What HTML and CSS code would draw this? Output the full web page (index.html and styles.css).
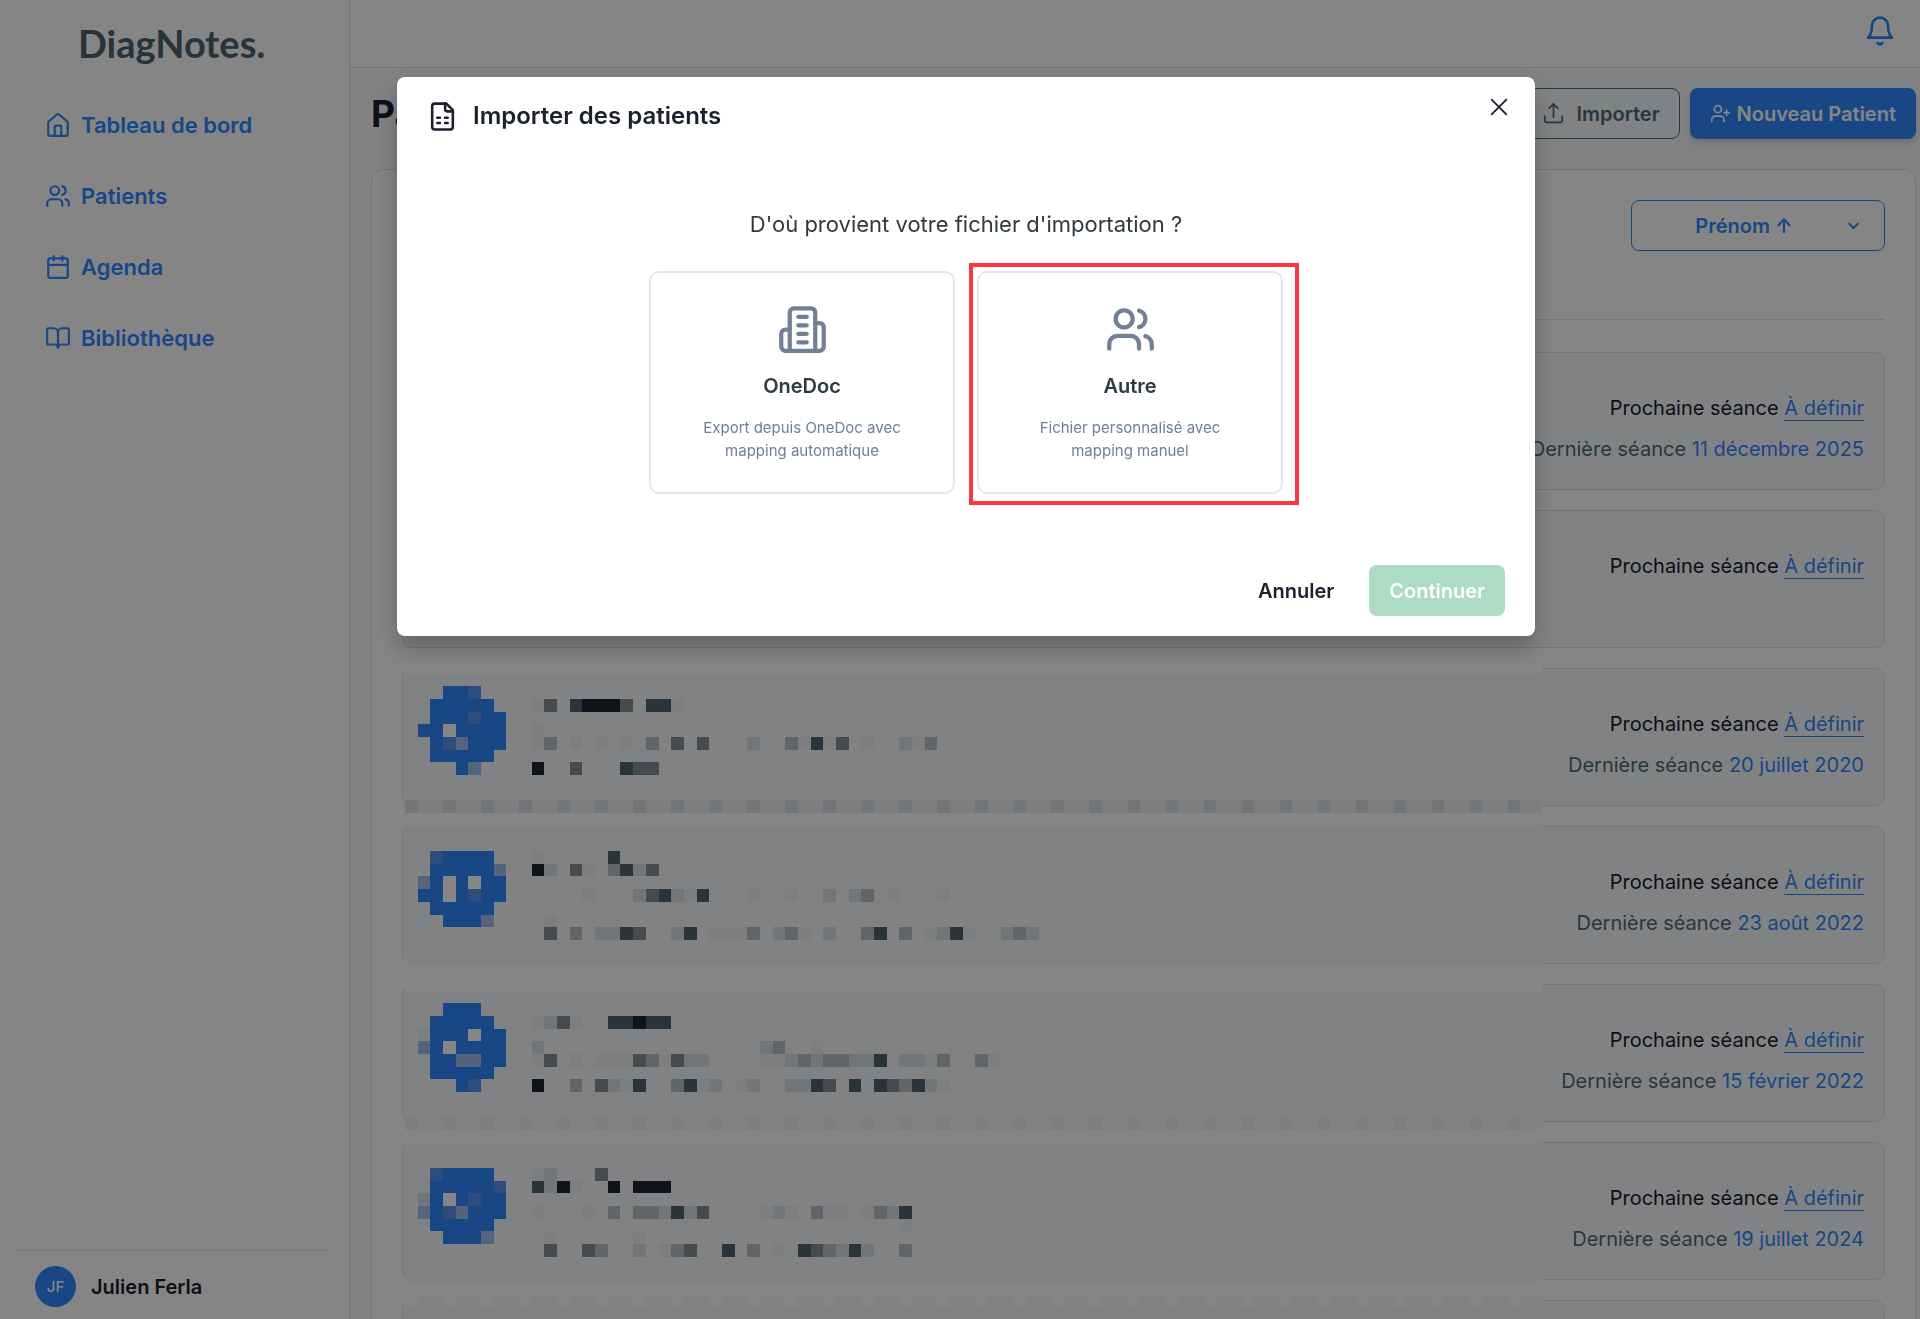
FILE: index.html
```
<!DOCTYPE html>
<html lang="fr">
<head>
    <meta charset="UTF-8">
    <meta name="viewport" content="width=device-width, initial-scale=1.0">
    <title>DiagNotes - Patients</title>
    <link rel="stylesheet" href="styles.css">
</head>
<body>
    <!-- Shared icons -->
    <svg class="sprite" aria-hidden="true">
        <symbol id="icon-users" viewBox="0 0 24 24">
            <path d="M16 21v-2a4 4 0 0 0-4-4H6a4 4 0 0 0-4 4v2"/>
            <circle cx="9" cy="7" r="4"/>
            <path d="M22 21v-2a4 4 0 0 0-3-3.87"/>
            <path d="M16 3.13a4 4 0 0 1 0 7.75"/>
        </symbol>
    </svg>

    <div class="app">
        <aside class="sidebar">
            <div class="logo">DiagNotes.</div>
            <nav class="nav">
                <a class="nav-link" href="#">
                    <svg class="icon icon-nav" viewBox="0 0 24 24"><path d="M3 10a2 2 0 0 1 .7-1.5l7-6a2 2 0 0 1 2.6 0l7 6A2 2 0 0 1 21 10v10a2 2 0 0 1-2 2H5a2 2 0 0 1-2-2z"/><path d="M9 22v-8.500a1 1 0 0 1 1-1h4a1 1 0 0 1 1 1V22"/></svg>
                    Tableau de bord
                </a>
                <a class="nav-link" href="#">
                    <svg class="icon icon-nav"><use href="#icon-users"/></svg>
                    Patients
                </a>
                <a class="nav-link" href="#">
                    <svg class="icon icon-nav" viewBox="0 0 24 24"><rect x="3" y="4" width="18" height="18" rx="2"/><path d="M8 2v4M16 2v4M3 10h18"/></svg>
                    Agenda
                </a>
                <a class="nav-link" href="#">
                    <svg class="icon icon-nav" viewBox="0 0 24 24"><path d="M12 7v14"/><path d="M3 18a1 1 0 0 1-1-1V4a1 1 0 0 1 1-1h5a4 4 0 0 1 4 4 4 4 0 0 1 4-4h5a1 1 0 0 1 1 1v13a1 1 0 0 1-1 1h-6a3 3 0 0 0-3 3 3 3 0 0 0-3-3z"/></svg>
                    Bibliothèque
                </a>
            </nav>
            <div class="account">
                <span class="account-badge">JF</span>
                <span>Julien Ferla</span>
            </div>
        </aside>

        <div class="content">
            <header class="topbar">
                <button class="bell" type="button" aria-label="Notifications">
                    <svg class="icon icon-bell" viewBox="0 0 24 24"><path d="M6 8a6 6 0 0 1 12 0c0 7 3 9 3 9H3s3-2 3-9"/><path d="M10.300 21a1.940 1.940 0 0 0 3.400 0"/></svg>
                </button>
            </header>

            <main class="page">
                <div class="page-head">
                    <h1>Patients</h1>
                    <div class="page-actions">
                        <button class="btn btn-outline" type="button">
                            <svg class="icon icon-btn" viewBox="0 0 24 24"><path d="M2 15v5a2 2 0 0 0 2 2h16a2 2 0 0 0 2-2v-5"/><path d="M7 6l5-5 5 5M12 1v15"/></svg>
                            Importer
                        </button>
                        <button class="btn btn-primary" type="button">
                            <svg class="icon icon-btn" viewBox="0 0 24 24"><path d="M16 21v-2a4 4 0 0 0-4-4H6a4 4 0 0 0-4 4v2"/><circle cx="9" cy="7" r="4"/><path d="M19 8v6M22 11h-6"/></svg>
                            Nouveau Patient
                        </button>
                    </div>
                </div>

                <section class="panel">
                    <div class="toolbar">
                        <div class="select-wrap">
                            <select class="sort" aria-label="Trier par">
                                <option>Prénom ↑</option>
                            </select>
                            <svg class="icon icon-chevron" viewBox="0 0 24 24"><path d="M5 9l7 7 7-7"/></svg>
                        </div>
                    </div>

                    <div class="patients">
                        <article class="patient">
                            <p class="next">Prochaine séance <a href="#">À définir</a></p>
                            <p class="last">Dernière séance <span>11 décembre 2025</span></p>
                        </article>
                        <article class="patient">
                            <p class="next">Prochaine séance <a href="#">À définir</a></p>
                        </article>
                        <article class="patient">
                            <p class="next">Prochaine séance <a href="#">À définir</a></p>
                            <p class="last">Dernière séance <span>20 juillet 2020</span></p>
                        </article>
                        <article class="patient">
                            <p class="next">Prochaine séance <a href="#">À définir</a></p>
                            <p class="last">Dernière séance <span>23 août 2022</span></p>
                        </article>
                        <article class="patient">
                            <p class="next">Prochaine séance <a href="#">À définir</a></p>
                            <p class="last">Dernière séance <span>15 février 2022</span></p>
                        </article>
                        <article class="patient">
                            <p class="next">Prochaine séance <a href="#">À définir</a></p>
                            <p class="last">Dernière séance <span>19 juillet 2024</span></p>
                        </article>
                        <article class="patient"></article>
                        <svg id="mosaic" class="mosaic" viewBox="0 -1 89.7 52" shape-rendering="crispEdges" aria-hidden="true"></svg>
                    </div>
                </section>
            </main>
        </div>
    </div>

    <div class="overlay">
        <div class="modal" role="dialog" aria-modal="true" aria-labelledby="modal-title">
            <div class="modal-head">
                <svg class="icon icon-file" viewBox="0 0 24 24"><path d="M15 2H6a2 2 0 0 0-2 2v16a2 2 0 0 0 2 2h12a2 2 0 0 0 2-2V7z"/><path d="M14 2v4a2 2 0 0 0 2 2h4"/><path d="M8 13h2M14 13h2M8 17h2M14 17h2"/></svg>
                <h2 id="modal-title">Importer des patients</h2>
                <button class="close" type="button" aria-label="Fermer">
                    <svg class="icon icon-close" viewBox="0 0 24 24"><path d="M4 4l16 16M20 4L4 20"/></svg>
                </button>
            </div>
            <div class="modal-body">
                <p class="question">D'où provient votre fichier d'importation ?</p>
                <div class="sources">
                    <button class="source" type="button">
                        <svg class="icon icon-source" viewBox="0 0 24 24"><path d="M6 22V4a2 2 0 0 1 2-2h8a2 2 0 0 1 2 2v18z"/><path d="M6 12H4a2 2 0 0 0-2 2v6a2 2 0 0 0 2 2h2"/><path d="M18 9h2a2 2 0 0 1 2 2v9a2 2 0 0 1-2 2h-2"/><path d="M10 6h4M10 10h4M10 14h4M10 18h4"/></svg>
                        <strong>OneDoc</strong>
                        <span>Export depuis OneDoc avec mapping automatique</span>
                    </button>
                    <div class="source-marked">
                        <button class="source" type="button">
                            <svg class="icon icon-source"><use href="#icon-users"/></svg>
                            <strong>Autre</strong>
                            <span>Fichier personnalisé avec mapping manuel</span>
                        </button>
                    </div>
                </div>
            </div>
            <div class="modal-foot">
                <button class="btn btn-ghost" type="button">Annuler</button>
                <button class="btn btn-continue" type="button" disabled>Continuer</button>
            </div>
        </div>
    </div>

    <script src="mosaic.js"></script>
</body>
</html>
```
FILE: styles.css
```
* {
    box-sizing: border-box;
}
body {
    margin: 0;
    height: 100vh;
    overflow: hidden;
    font-family: Inter, "Liberation Sans", sans-serif;
    font-size: 20px;
    line-height: 30px;
    color: #1a202c;
    background-color: #fff;
}
h1, h2, p {
    margin: 0;
}
button, select {
    font: inherit;
    cursor: pointer;
}
.sprite {
    display: none;
}
.icon {
    flex-shrink: 0;
    fill: none;
    stroke: currentColor;
    stroke-width: 2;
    stroke-linecap: round;
    stroke-linejoin: round;
}
.app {
    display: flex;
    height: 100vh;
}

/* Sidebar */
.sidebar {
    display: flex;
    flex-direction: column;
    width: 350px;
    flex-shrink: 0;
    padding: 18px 20px 12px 15px;
    border-right: 1px solid #dbe2ea;
}
.logo {
    padding-left: 63px;
    font-family: Lato, sans-serif;
    font-size: 38px;
    font-weight: 700;
    line-height: 50px;
    color: #4b6470;
}
.nav {
    display: flex;
    flex-direction: column;
    gap: 41px;
    padding: 42px 0 0 30px;
}
.nav-link {
    display: flex;
    align-items: center;
    gap: 10px;
    font-size: 22px;
    font-weight: 600;
    color: #3187ff;
    text-decoration: none;
}
.icon-nav {
    width: 26px;
    height: 26px;
}
.account {
    display: flex;
    align-items: center;
    gap: 15px;
    margin-top: auto;
    padding: 15px 20px 0;
    border-top: 2px solid #eceff3;
    font-weight: 600;
}
.account-badge {
    display: flex;
    align-items: center;
    justify-content: center;
    width: 41px;
    height: 41px;
    border-radius: 50%;
    background-color: #3187ff;
    color: #fff;
    font-size: 15px;
    font-weight: 500;
}

/* Main column */
.content {
    flex: 1;
    min-width: 0;
    display: flex;
    flex-direction: column;
    overflow: hidden;
    background-color: #f7fafd;
}
.topbar {
    display: flex;
    justify-content: flex-end;
    align-items: center;
    height: 68px;
    flex-shrink: 0;
    padding: 0 24px 5px 0;
    background-color: #fff;
    border-bottom: 1px solid #dbe2ea;
}
.bell {
    display: flex;
    padding: 0;
    border: none;
    background: none;
    color: #3187ff;
}
.icon-bell {
    width: 32px;
    height: 32px;
}
.page {
    padding: 20px 4px 0 21px;
}
.page-head {
    display: flex;
    justify-content: space-between;
    align-items: center;
}
h1 {
    font-size: 37px;
    font-weight: 700;
}
.page-actions {
    display: flex;
    gap: 10px;
}
.btn {
    display: flex;
    align-items: center;
    height: 51px;
    padding: 0 19px;
    border: 1px solid transparent;
    border-radius: 8px;
    font-weight: 600;
}
.btn-outline {
    gap: 12px;
    border-color: #4f6a77;
    background: none;
    color: #4f6a77;
}
.btn-primary {
    gap: 6px;
    background-color: #3187ff;
    color: #fff;
    box-shadow: 0 4px 8px rgba(0, 0, 0, 0.15);
}
.icon-btn {
    width: 21px;
    height: 21px;
}
.panel {
    margin-top: 30px;
    padding: 30px;
    background-color: #fff;
    border: 1px solid #dbe2ea;
    border-radius: 12px;
}
.toolbar {
    display: flex;
    justify-content: flex-end;
    padding-bottom: 68px;
    border-bottom: 1px solid #dbe2ea;
}
.select-wrap {
    position: relative;
    width: 254px;
}
.sort {
    appearance: none;
    width: 100%;
    height: 51px;
    padding: 0 48px 0 20px;
    border: 1px solid #3187ff;
    border-radius: 8px;
    background-color: #fff;
    color: #3187ff;
    font-weight: 600;
    text-align: center;
    text-align-last: center;
}
.icon-chevron {
    position: absolute;
    right: 24px;
    top: 18px;
    width: 15px;
    height: 15px;
    color: #3187ff;
    stroke-width: 3;
    pointer-events: none;
}

/* Patient list */
.patients {
    position: relative;
    display: flex;
    flex-direction: column;
    gap: 20px;
    padding-top: 32px;
}
.patient {
    display: flex;
    flex-direction: column;
    align-items: flex-end;
    gap: 11px;
    min-height: 138px;
    padding: 40px 20px 20px;
    background-color: #f7fafd;
    border: 1px solid #dbe2ea;
    border-radius: 10px;
}
.next a {
    color: #3187ff;
    text-decoration: none;
    border-bottom: 1px solid #3187ff;
}
.last {
    color: #4f6a77;
}
.last span {
    color: #3187ff;
}
.mosaic {
    position: absolute;
    top: 341px;
    left: 3px;
    width: 1137px;
}
.m-page { fill: #fff; }
.m-card { fill: #f7fafd; }
.m-1 { fill: #f0f2f4; }
.m-2 { fill: #dde2e8; }
.m-3 { fill: #bdc2c7; }
.m-4 { fill: #8a9195; }
.m-5 { fill: #4f6670; }
.m-6 { fill: #1f2733; }
.m-B { fill: #3187ff; }
.m-d { fill: #5c92f0; }
.m-c { fill: #a3beef; }
.m-w { fill: #fff; }

/* Import dialog */
.overlay {
    position: fixed;
    inset: 0;
    display: flex;
    justify-content: center;
    align-items: flex-start;
    padding: 77px 0 0 12px;
    background-color: rgba(0, 0, 0, 0.48);
}
.modal {
    width: 100%;
    max-width: 1138px;
    background-color: #fff;
    border-radius: 8px;
    box-shadow: 0 12px 24px rgba(0, 0, 0, 0.25);
}
.modal-head {
    display: flex;
    align-items: flex-end;
    gap: 15px;
    height: 55px;
    padding: 19px 25px 0 30px;
}
.icon-file {
    width: 31px;
    height: 31px;
}
h2 {
    flex: 1;
    font-size: 24px;
    font-weight: 600;
    line-height: 32px;
}
.close {
    display: flex;
    align-self: flex-start;
    padding: 0;
    border: none;
    background: none;
    color: inherit;
}
.icon-close {
    width: 22px;
    height: 22px;
}
.modal-body {
    padding: 77px 30px 0;
    color: #2d3a42;
}
.question {
    font-size: 22px;
    text-align: center;
}
.sources {
    display: flex;
    justify-content: center;
    gap: 22px;
    padding-top: 32px;
}
.source {
    display: flex;
    flex-direction: column;
    align-items: center;
    width: 306px;
    padding: 31px 48px 30px;
    border: 2px solid #e2e8f0;
    border-radius: 10px;
    background-color: #fff;
    color: #2d3a42;
}
.source strong {
    margin-top: 16px;
    font-weight: 600;
}
.source span {
    margin-top: 15px;
    font-size: 15px;
    line-height: 23px;
    color: #718096;
}
.icon-source {
    width: 51px;
    height: 51px;
    color: #718096;
}
.source-marked {
    position: relative;
}
.source-marked::after {
    content: "";
    position: absolute;
    inset: -8px -16px -11px -8px;
    border: 4px solid #ff3341;
    pointer-events: none;
}
.modal-foot {
    display: flex;
    justify-content: flex-end;
    gap: 15px;
    padding: 71px 30px 20px;
}
.btn-ghost {
    background: none;
    color: #1a202c;
}
.btn-continue {
    background-color: #aedbc3;
    color: #fff;
}
```
FILE: mosaic.js
```
const mosaic = document.getElementById('mosaic');

function addRect(x, y, width, height, name) {
    const rect = document.createElementNS('http://www.w3.org/2000/svg', 'rect');
    rect.setAttribute('x', x);
    rect.setAttribute('y', y);
    rect.setAttribute('width', width);
    rect.setAttribute('height', height);
    rect.setAttribute('class', 'm-' + name);
    mosaic.appendChild(rect);
}

// Row number -> tiles from the left edge, "." is an empty tile
const rows = {
    1: '...BBd',
    2: '..BBBBB...14.56664.551',
    3: '..BBBdBB',
    4: '.BBwBBBB..1',
    5: '..BdcBBB..13.1.1.1.3.4.4...2..31514.1..213',
    6: '..BBBBB',
    7: '....Bc....6..4...544',
    14: '..dBBBB...1.....5',
    15: '..BBBBBc..62.41.3524',
    16: '.cBwBwBB',
    17: '.BBwBdBB......1...245215...1..1..2.23.1...1',
    18: '..BBBBB',
    19: '...BBBc....1',
    20: '...........4.3.2254..25.1113.231.2..35.3.1251..232',
    26: '...BBB',
    27: '..BBBBB...1241..55655',
    28: '.1BBBwBB',
    29: '.cBwBBBB..2.................23..1',
    30: '..BBccBB..14.1.111431422....1123233225.2213..31',
    31: '..BBBBB',
    32: '....Bd....6..3.4215..3512.12..2254.5.543521',
    39: '..dBBBB...12...4',
    40: '..BBBBBd..5261..6.666',
    41: '.2BwBdBB',
    42: '.cBdcBBB..1...1.3.332524....121.311.1325',
    43: '..BBBBB................................1',
    44: '...BBBc....1......1',
    45: '...........4..43..2.134..5.3.1.543252..3'
};

// Background and cards
addRect(0, -1, 90, 52, 'page');
addRect(0, 0, 90, 10, 'card');
addRect(0, 12, 90, 11, 'card');
addRect(0, 25, 90, 11, 'card');
addRect(0, 37, 90, 11, 'card');
addRect(0, 50, 90, 1, 'card');

// Card edges
for (let x = 0; x < 90; x++) {
    addRect(x, 10, 1, 1, x % 3 === 0 ? '2' : '1');
    if (x % 3 === 0) {
        addRect(x, 35, 1, 1, '1');
    } else {
        addRect(x, 49, 1, 1, 'card');
    }
}

for (const y in rows) {
    [...rows[y]].forEach((name, x) => {
        if (name !== '.') {
            addRect(x, y, 1, 1, name);
        }
    });
}
```
